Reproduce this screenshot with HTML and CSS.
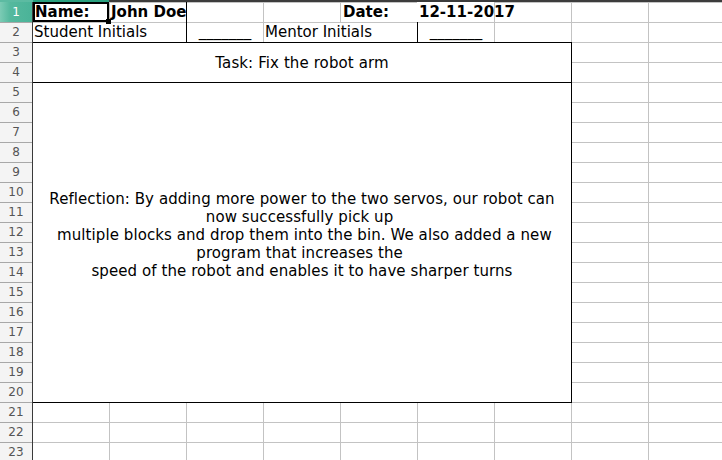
FILE: index.html
```html
<!DOCTYPE html>
<html>
<head>
<meta charset="utf-8">
<link rel="stylesheet" href="styles.css">
</head>
<body>
<div class="app">
  <div class="topstrip">
    <div class="ts-corner"></div>
    <div class="ts-sel"></div>
    <div class="ts-rest"></div>
  </div>
  <div class="main">
    <div class="rowheads">
      <div class="rh rh-sel">1</div>
      <div class="rh">2</div>
      <div class="rh">3</div>
      <div class="rh">4</div>
      <div class="rh">5</div>
      <div class="rh">6</div>
      <div class="rh">7</div>
      <div class="rh">8</div>
      <div class="rh">9</div>
      <div class="rh">10</div>
      <div class="rh">11</div>
      <div class="rh">12</div>
      <div class="rh">13</div>
      <div class="rh">14</div>
      <div class="rh">15</div>
      <div class="rh">16</div>
      <div class="rh">17</div>
      <div class="rh">18</div>
      <div class="rh">19</div>
      <div class="rh">20</div>
      <div class="rh">21</div>
      <div class="rh">22</div>
      <div class="rh rh-last">23</div>
    </div>
    <div class="sheet">
      <div class="cell bold a1">Name:</div>
      <div class="cell bold b1">John Doe</div>
      <div class="cell c1"></div>
      <div class="cell bold e1">Date:</div>
      <div class="cell bold f1">12-11-2017</div>
      <div class="cell a2">Student Initials</div>
      <div class="cell center c2">_______</div>
      <div class="cell d2">Mentor Initials</div>
      <div class="cell center f2">_______</div>
      <div class="box task">Task: Fix the robot arm</div>
      <div class="box reflect"><div class="reflect-text">Reflection: By adding more power to the two servos, our robot can
now successfully pick up 
 multiple blocks and drop them into the bin. We also added a new
program that increases the 
speed of the robot and enables it to have sharper turns</div></div>
    </div>
  </div>
</div>
</body>
</html>
```

FILE: styles.css
```css
html, body {
  margin: 0;
  padding: 0;
  background: #ffffff;
  overflow: hidden;
}
body {
  width: 722px;
  height: 460px;
  font-family: "DejaVu Sans", "Liberation Sans", sans-serif;
  color: #000;
}
.app {
  width: 722px;
  height: 460px;
  overflow: hidden;
}
.topstrip {
  display: flex;
  height: 2px;
}
.ts-corner {
  width: 33px;
  background: #5cbba2;
}
.ts-sel {
  width: 76px;
  background: #2aa07f;
}
.ts-rest {
  flex: 1;
  background: #3c3c3c;
}
.main {
  display: flex;
}
.rowheads {
  width: 33px;
  box-sizing: border-box;
  border-right: 1px solid #3a3a3a;
  background: #f4f4f4;
  flex: none;
}
.rh {
  height: 20px;
  box-sizing: border-box;
  border-top: 1px solid #a8a8a8;
  font-size: 12px;
  line-height: 19px;
  text-align: center;
  color: #555;
}
.rh-last {
  height: 18px;
  line-height: 18px;
}
.rh-sel {
  border-top: none;
  line-height: 20px;
  color: #fff;
  background: linear-gradient(to right, #7ccbb5 0px, #55b99e 10px, #4ab398 100%);
}
.sheet {
  display: grid;
  grid-template-columns: 76px repeat(7, 77px) 74px;
  grid-template-rows: repeat(22, 20px) 18px;
  background-image:
    linear-gradient(to right, #c3c3c3 1px, transparent 1px),
    linear-gradient(to bottom, #c3c3c3 1px, transparent 1px);
  background-size: 77px 20px;
  background-position: 76px 0;
  font-size: 15px;
}
.cell {
  position: relative;
  line-height: 20px;
  padding-left: 2px;
  white-space: nowrap;
  box-sizing: border-box;
}
.bold {
  font-weight: bold;
}
.center {
  text-align: center;
  padding-left: 0;
}
.a1 {
  grid-column: 1;
  grid-row: 1;
  padding-left: 2px;
  background: #fff;
  z-index: 2;
}
.a1::after {
  content: "";
  position: absolute;
  left: 0;
  top: 0;
  width: 76px;
  height: 20px;
  box-sizing: border-box;
  border: 2px solid #000;
}
.a1::before {
  content: "";
  position: absolute;
  left: 73px;
  top: 17px;
  width: 5px;
  height: 5px;
  background: #000;
  z-index: 3;
}
.b1 {
  grid-column: 2;
  grid-row: 1;
}
.c1 {
  grid-column: 3;
  grid-row: 1;
  border-left: 1px solid #000;
}
.e1 {
  grid-column: 5;
  grid-row: 1;
  padding-left: 3px;
}
.f1 {
  grid-column: 6;
  grid-row: 1;
  background: #fff;
  padding-left: 2px;
}
.a2 {
  grid-column: 1 / 3;
  grid-row: 2;
  background: #fff;
  border-top: 1px solid #c3c3c3;
  padding-left: 1px;
  line-height: 19px;
}
.c2 {
  grid-column: 3;
  grid-row: 2;
  border-left: 1px solid #000;
  line-height: 18px;
}
.d2 {
  grid-column: 4 / 6;
  grid-row: 2;
  background: #fff;
  border-top: 1px solid #c3c3c3;
  border-left: 1px solid #c3c3c3;
  padding-left: 1px;
  line-height: 19px;
}
.f2 {
  grid-column: 6;
  grid-row: 2;
  border-left: 1px solid #000;
  line-height: 18px;
}
.box {
  grid-column: 1 / 8;
  background: #fff;
  border-top: 1px solid #000;
  border-right: 1px solid #000;
  margin-right: -1px;
  box-sizing: border-box;
  display: flex;
  align-items: center;
  justify-content: center;
  text-align: center;
}
.task {
  grid-row: 3 / 5;
  font-size: 15px;
  line-height: 18px;
  letter-spacing: 0.1px;
}
.reflect {
  grid-row: 5 / 21;
  border-bottom: 1px solid #000;
  margin-bottom: -1px;
  padding-bottom: 16px;
}
.reflect-text {
  white-space: pre;
  font-size: 15px;
  line-height: 18px;
  letter-spacing: 0.08px;
  text-align: center;
}
```
